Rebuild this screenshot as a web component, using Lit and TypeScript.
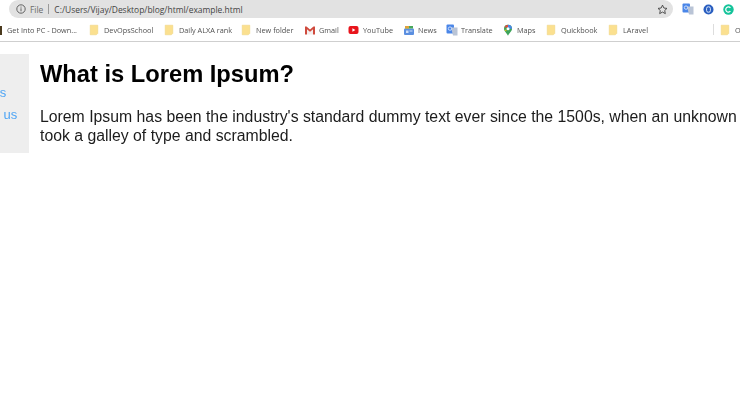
import { LitElement, html, css, svg } from "lit";
import { customElement } from "lit/decorators.js";

const folder = svg`<path d="M1.2 1.2h7.6v8.2l-1.4 1.4H1.2z" fill="#fbe08f" stroke="#ecd07a" stroke-width=".5"/>`;
const translate = svg`<rect x="0.5" y="0.5" width="7.5" height="9" rx="1" fill="#4a86e8"/><path d="M5 3.5h6.5v8H7z" fill="#b9c4d6"/><circle cx="4" cy="4.6" r="1.7" fill="none" stroke="#d5e3fb" stroke-width=".9"/>`;
const icons: Record<string, any> = {
  folder,
  translate,
  gmail: svg`<path d="M1 2.5h1.5L6 5.5l3.5-3H11v8H9V5.5L6 8 3 5.5v5H1z" fill="#cf4a3d"/><path d="M3 5.5v5h6v-5L6 8z" fill="#f3eeee"/>`,
  yt: svg`<rect x="0.5" y="2" width="10" height="8" rx="2" fill="#e8141c"/><path d="M4.4 4.2v3.6L7.4 6z" fill="#fff"/>`,
  news: svg`<rect x="1" y="4.5" width="10" height="6.5" rx="1" fill="#5b8fe0"/><path d="M2 4.5V2h8v2.5z" fill="#49a85b"/><path d="M2 2h4v2.5H2z" fill="#e0a23c"/><rect x="3" y="6.5" width="2.5" height="2.5" fill="#cfe0fa"/><rect x="6.5" y="6.5" width="3" height="1" fill="#cfe0fa"/>`,
  maps: svg`<path d="M6 .8a4 4 0 0 1 4 4c0 2.6-2.6 4-4 7-1.4-3-4-4.4-4-7a4 4 0 0 1 4-4z" fill="#3da45a"/><path d="M2.3 3.4A4 4 0 0 1 6 .8v2.6z" fill="#e3493b"/><path d="M6 .8a4 4 0 0 1 4 4H6z" fill="#4a86e8"/><path d="M4.4 7.6 2.6 6.2l1.6-1z" fill="#f4c20d"/><circle cx="6" cy="4.8" r="1.5" fill="#fff"/>`,
  pc: svg`<rect x="0" y="2" width="2" height="9" fill="#4b3a1e"/>`,
};

const items = [
  { i: "pc", t: "Get Into PC - Down...", w: 89, iw: 4 },
  { i: "folder", t: "DevOpsSchool", w: 75 },
  { i: "folder", t: "Daily ALXA rank", w: 77 },
  { i: "folder", t: "New folder", w: 63 },
  { i: "gmail", t: "Gmail", w: 44 },
  { i: "yt", t: "YouTube", w: 55 },
  { i: "news", t: "News", w: 43 },
  { i: "translate", t: "Translate", w: 56 },
  { i: "maps", t: "Maps", w: 44 },
  { i: "folder", t: "Quickbook", w: 62 },
  { i: "folder", t: "LAravel", w: 105 },
];

@customElement("app-root")
export class AppRoot extends LitElement {
  static styles = css`
    :host { display: block; width: 740px; height: 414px; overflow: hidden; background: #fff; font-family: "Liberation Sans", Arial, sans-serif; }
    .chrome { height: 41px; border-bottom: 1px solid #cfcfcf; font-family: "Open Sans", sans-serif; filter: blur(.35px); }
    .top { height: 18px; display: flex; align-items: center; padding-left: 9px; }
    .omni { width: 664px; height: 18px; border-radius: 9px; background: #e2e2e2; display: flex; align-items: center; font-size: 8.45px; color: #444; box-sizing: border-box; padding: 0 5px 0 7px; }
    .omni svg { flex: none; }
    .file { margin-left: 4px; color: #6b6b6b; }
    .sep { width: 1px; height: 10px; background: #9a9a9a; margin: 0 5px; }
    .url { flex: 1; }
    .ext { display: flex; align-items: center; margin-left: 9px; gap: 9px; }
    .bars { height: 23px; display: flex; align-items: center; font-size: 7.3px; color: #505050; white-space: nowrap; }
    .bm { display: flex; align-items: center; flex: none; gap: 3px; }
    .bm svg { flex: none; }
    .vsep { width: 1px; height: 11px; background: #ddd; flex: none; margin-right: 6px; }
    .page { display: flex; align-items: flex-start; margin-top: 12px; filter: blur(.25px); }
    .side { flex: none; width: 94px; height: 99px; margin-left: -65px; background: #eee; box-sizing: border-box; padding: 30px 0 0 20px; display: flex; flex-direction: column; gap: 5px; font-size: 13px; line-height: 17px; color: #4ea5f5; white-space: nowrap; }
    .main { margin-left: 11px; white-space: nowrap; color: #000; }
    h1 { margin: 6px 0 0; font-size: 23.7px; line-height: 28px; font-weight: 700; }
    p { margin: 19px 0 0; font-size: 15.8px; line-height: 19px; color: #1c1c1c; }
  `;
  render() {
    return html`
      <div class="chrome">
        <div class="top">
          <div class="omni">
            <svg width="10" height="10" viewBox="0 0 10 10"><circle cx="5" cy="5" r="4.2" fill="none" stroke="#555" stroke-width=".9"/><path d="M5 4.3v3M5 2.6v1" stroke="#555" stroke-width=".9"/></svg>
            <span class="file">File</span><span class="sep"></span>
            <span class="url">C:/Users/Vijay/Desktop/blog/html/example.html</span>
            <svg width="11" height="11" viewBox="0 0 12 12"><path d="M6 1.2l1.5 3.2 3.4.4-2.5 2.3.7 3.4L6 8.8l-3.1 1.7.7-3.4L1.1 4.8l3.4-.4z" fill="none" stroke="#444" stroke-width="1"/></svg>
          </div>
          <div class="ext">
            <svg width="12" height="12" viewBox="0 0 12 12">${translate}</svg>
            <svg width="11" height="11" viewBox="0 0 11 11"><circle cx="5.5" cy="5.5" r="5" fill="#2a5fc0"/><rect x="3.6" y="2.8" width="3.8" height="5.4" rx="1.6" fill="none" stroke="#dbe7fb" stroke-width="1"/></svg>
            <svg width="11" height="11" viewBox="0 0 11 11"><circle cx="5.5" cy="5.5" r="5.2" fill="#15c39a"/><path d="M7.4 3.9a2.6 2.6 0 1 0 0 3.2" fill="none" stroke="#fff" stroke-width="1.2"/></svg>
          </div>
        </div>
        <div class="bars">
          ${items.map(
            (b) => html`<div class="bm" style="width:${b.w}px">
              <svg width="${b.iw ?? 12}" height="12" viewBox="0 0 ${b.iw ?? 12} 12">${icons[b.i]}</svg><span>${b.t}</span>
            </div>`
          )}
          <div class="vsep"></div>
          <div class="bm"><svg width="12" height="12" viewBox="0 0 12 12">${folder}</svg><span>Other</span></div>
        </div>
      </div>
      <div class="page">
        <nav class="side"><span>About us</span><span>Contact us</span></nav>
        <main class="main">
          <h1>What is Lorem Ipsum?</h1>
          <p>Lorem Ipsum has been the industry's standard dummy text ever since the 1500s, when an unknown<br />took a galley of type and scrambled.</p>
        </main>
      </div>
    `;
  }
}
